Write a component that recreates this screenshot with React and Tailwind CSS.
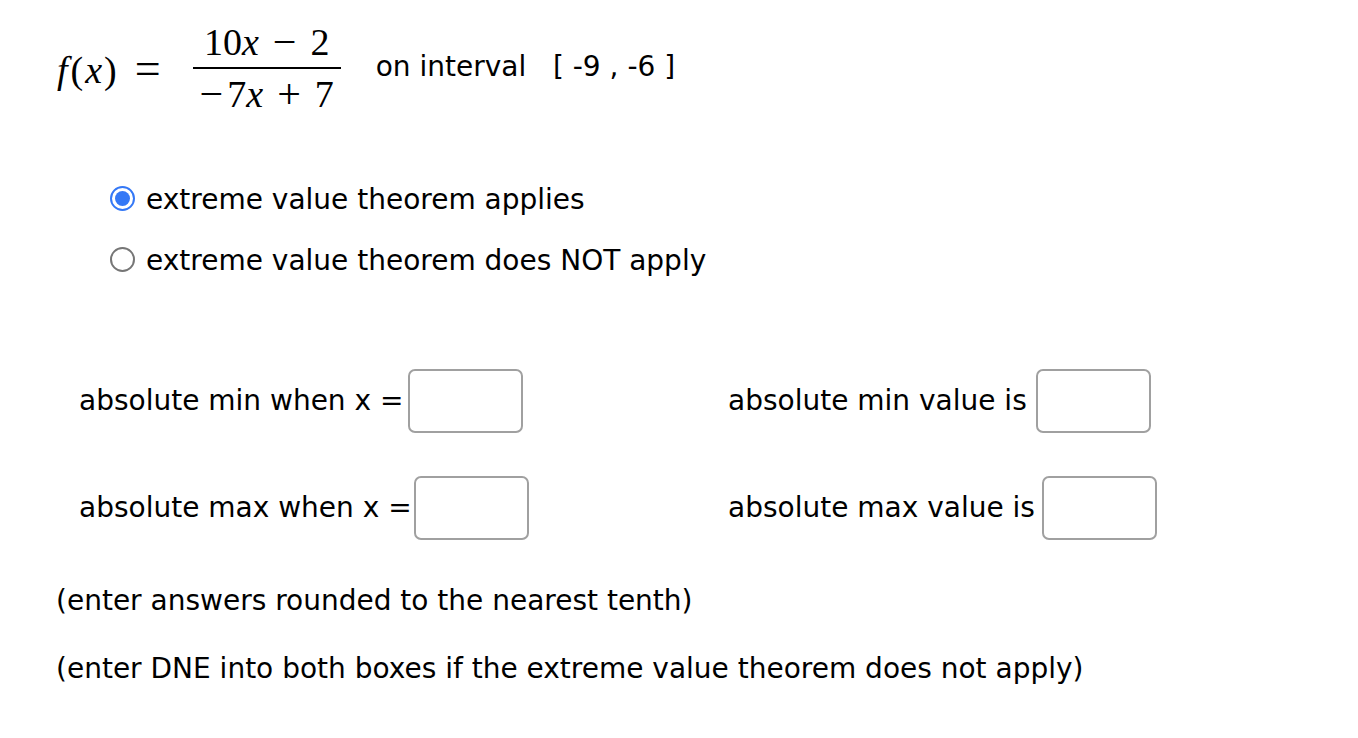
import React, { useState } from 'react';

const mathFont = { fontFamily: '"Liberation Serif", "DejaVu Serif", serif' };

function Radio({ checked, label, onClick }) {
    return (
        <label onClick={onClick} className="flex items-center h-[40px] cursor-pointer">
            <span className={`flex items-center justify-center w-[25px] h-[25px] rounded-full border-2 ${checked ? 'border-[#3478f6]' : 'border-[#767676]'} bg-white`}>
                {checked && <span className="w-[15px] h-[15px] rounded-full bg-[#3478f6]"></span>}
            </span>
            <span className="ml-[11px] mt-[3px]">{label}</span>
        </label>
    );
}

function Box({ className }) {
    return <input type="text" className={`w-[115px] h-[64px] border-2 border-[#a0a0a0] rounded-[7px] outline-none bg-white ${className || ''}`} />;
}

export default function App() {
    const [applies, setApplies] = useState(true);

    return (
        <div className="min-h-screen bg-white text-black text-[28px] leading-none" style={{ fontFamily: '"DejaVu Sans", Verdana, sans-serif' }}>
            <div className="flex items-center pt-[20px] pl-[57px]">
                <div className="flex items-center text-[38px] mt-[4px]" style={mathFont}>
                    <i>f</i><span className="ml-[3px]">(</span><i className="ml-[2px]">x</i><span className="ml-[2px]">)</span>
                    <span className="ml-[18px] text-[46px] -mt-[2px]">=</span>
                </div>
                <div className="flex flex-col items-center ml-[32px] text-[38px]" style={mathFont}>
                    <div className="h-[44px] flex items-center">
                        <span>10</span><i>x</i><span className="mx-[14px] text-[42px]">−</span><span>2</span>
                    </div>
                    <div className="h-[2px] w-[148px] bg-black my-[3px]"></div>
                    <div className="h-[44px] flex items-center">
                        <span className="text-[42px]">−</span><span className="ml-[4px]">7</span><i>x</i><span className="mx-[14px] text-[42px]">+</span><span>7</span>
                    </div>
                </div>
                <div className="ml-[35px] -mt-[2px]">on interval&nbsp;&nbsp; [ -9 , -6 ]</div>
            </div>

            <div className="pl-[110px] mt-[62px]">
                <Radio checked={applies} label="extreme value theorem applies" onClick={() => setApplies(true)} />
                <div className="h-[21px]"></div>
                <Radio checked={!applies} label="extreme value theorem does NOT apply" onClick={() => setApplies(false)} />
            </div>

            <div className="grid grid-cols-[649px_1fr] pl-[79px] mt-[90px] gap-y-[43px]">
                <div className="flex items-center">
                    <span>absolute min when x =</span>
                    <Box className="ml-[5px]" />
                </div>
                <div className="flex items-center">
                    <span>absolute min value is</span>
                    <Box className="ml-[9px]" />
                </div>
                <div className="flex items-center">
                    <span>absolute max when x =</span>
                    <Box className="ml-[2px]" />
                </div>
                <div className="flex items-center">
                    <span>absolute max value is</span>
                    <Box className="ml-[7px]" />
                </div>
            </div>

            <div className="pl-[56px] mt-[47px]">
                <p className="h-[28px]">(enter answers rounded to the nearest tenth)</p>
                <p className="mt-[40px]">(enter DNE into both boxes if the extreme value theorem does not apply)</p>
            </div>
        </div>
    );
}
